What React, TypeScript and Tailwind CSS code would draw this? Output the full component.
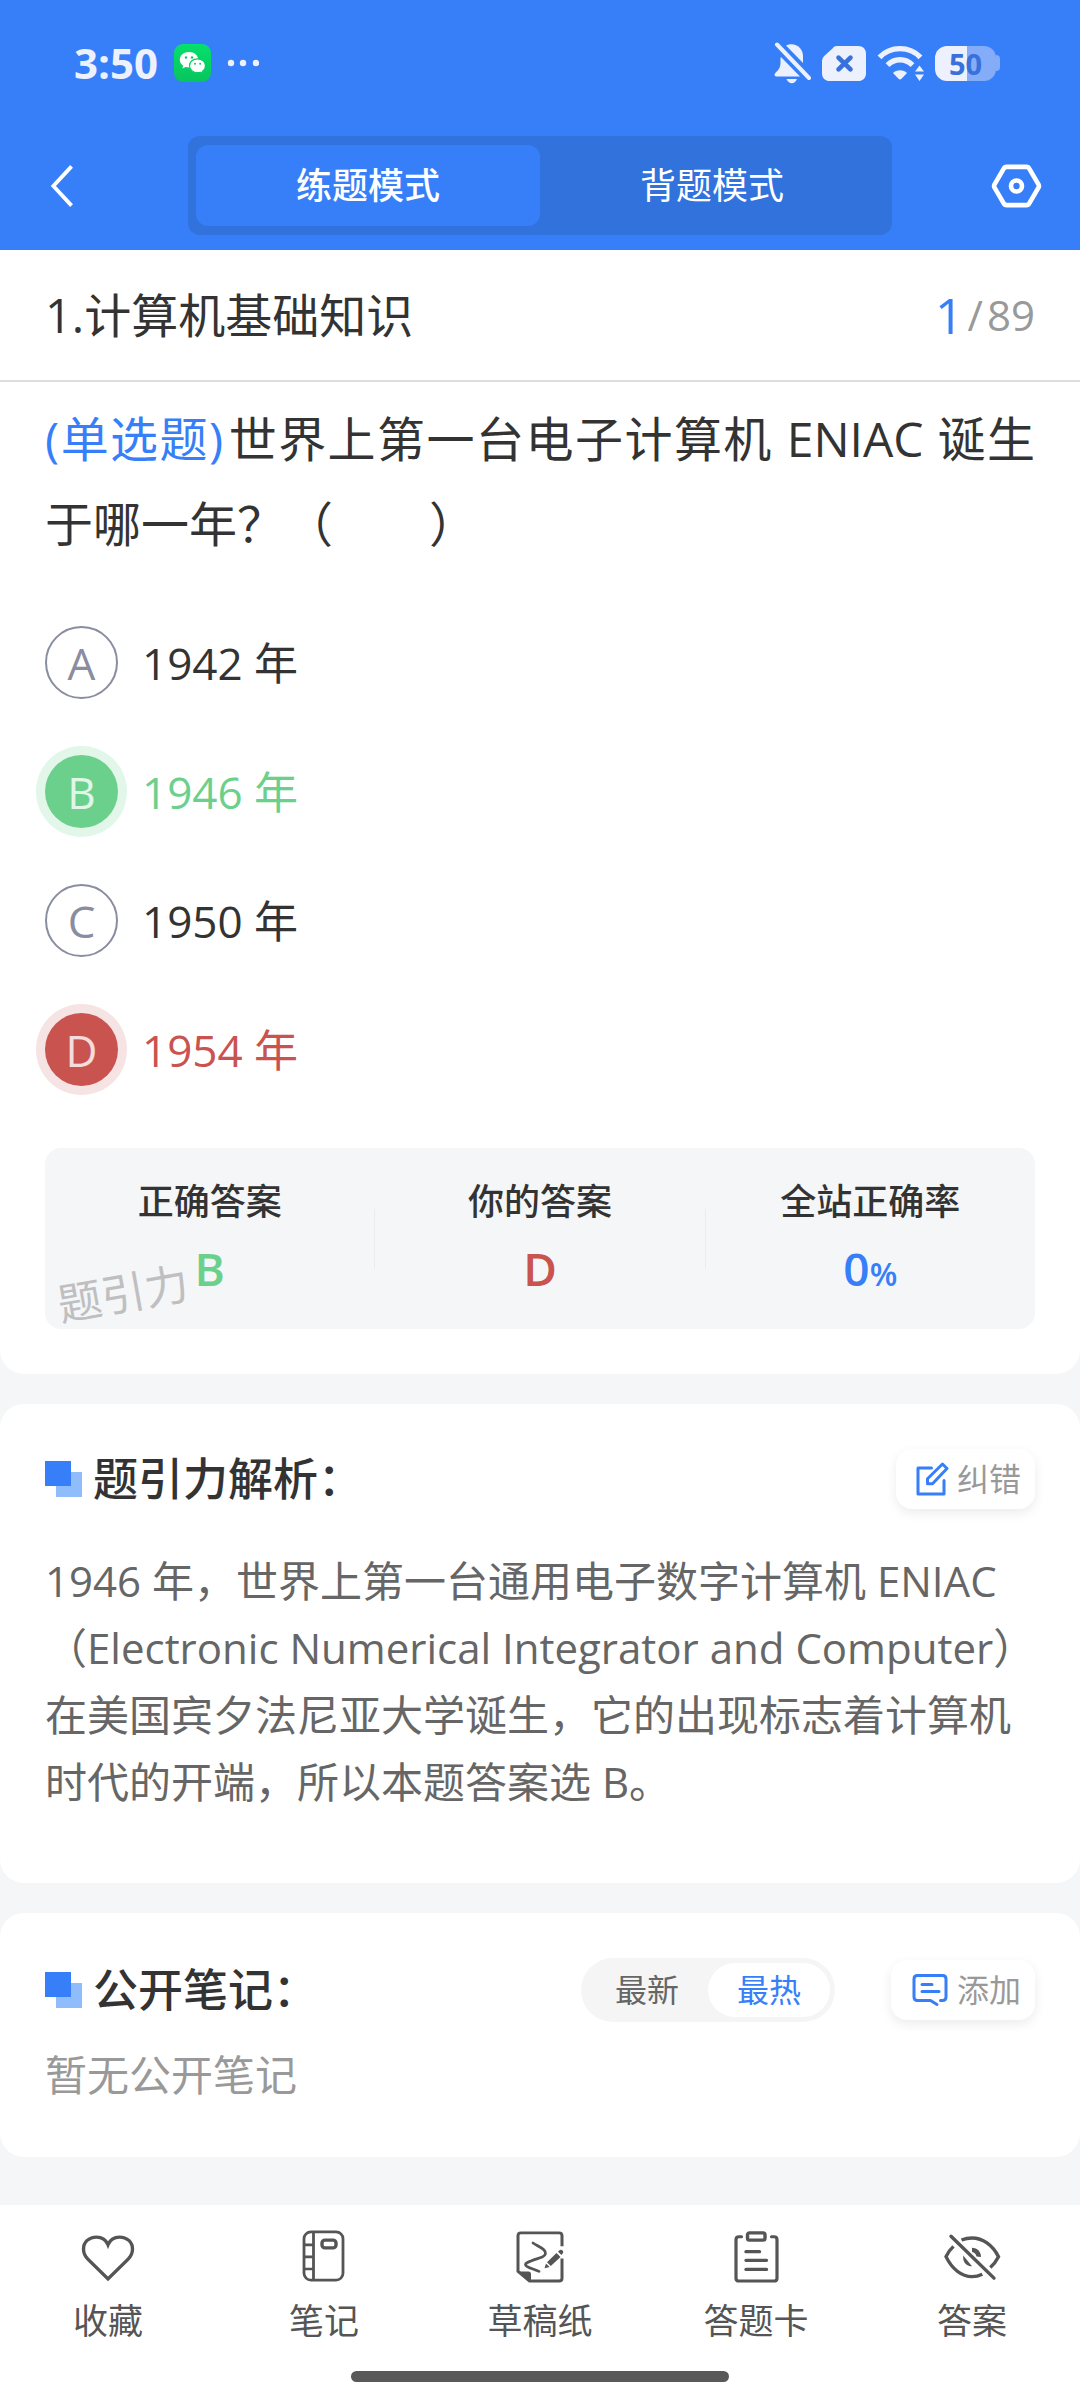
import type { ReactNode } from "react";

type OptionState = "idle" | "correct" | "wrong";

interface Option {
  key: string;
  text: string;
  state: OptionState;
}

const options: Option[] = [
  { key: "A", text: "1942 年", state: "idle" },
  { key: "B", text: "1946 年", state: "correct" },
  { key: "C", text: "1950 年", state: "idle" },
  { key: "D", text: "1954 年", state: "wrong" },
];

const badgeStyles: Record<OptionState, string> = {
  idle: "border-2 border-[#8a8da0] text-[#8a8da0]",
  correct: "bg-[#6bd08c] text-white/80 ring-[9px] ring-[#e2f7e9]",
  wrong: "bg-[#c9534f] text-white/80 ring-[9px] ring-[#f6e4e5]",
};

const textStyles: Record<OptionState, string> = {
  idle: "text-[#333333]",
  correct: "text-[#6bd08c]",
  wrong: "text-[#c9534f]",
};

function StatusBar() {
  return (
    <div className="flex h-[126px] items-center justify-between pr-[80px] pl-[74px]">
      <div className="flex items-center gap-4 text-[#ecf1fd]">
        <span className="text-[42px] leading-none font-bold">3:50</span>
        <svg width="37" height="38" viewBox="0 0 37 38" aria-hidden="true">
          <defs>
            <linearGradient id="wx" x1="0" y1="0" x2="0" y2="1">
              <stop offset="0" stopColor="#05e06c" />
              <stop offset="1" stopColor="#08c45d" />
            </linearGradient>
          </defs>
          <rect width="37" height="38" rx="9" fill="url(#wx)" />
          <path d="M15 8c-5.200 0-9.200 3.400-9.200 7.700 0 2.500 1.300 4.600 3.400 6l-.8 2.800 3.200-1.600c1 .3 2.200.5 3.400.5 5.200 0 9.200-3.400 9.200-7.700S20.200 8 15 8z" fill="#fff" />
          <path d="M23.500 14.800c-4.500 0-8 3-8 6.900s3.500 6.900 8 6.900c1 0 2-.1 2.900-.4l2.700 1.400-.7-2.400c1.900-1.300 3.100-3.200 3.100-5.500 0-3.900-3.500-6.900-8-6.900z" fill="#fff" stroke="#07cf63" strokeWidth="1.200" />
          <g fill="#07cf63">
            <circle cx="12" cy="13.500" r="1.200" />
            <circle cx="18" cy="13.500" r="1.200" />
            <circle cx="21" cy="19.700" r="1" />
            <circle cx="26.200" cy="19.700" r="1" />
          </g>
        </svg>
        <svg width="32" height="8" viewBox="0 0 32 8" fill="currentColor" aria-hidden="true">
          <circle cx="4" cy="4" r="3.200" />
          <circle cx="16" cy="4" r="3.200" />
          <circle cx="29" cy="4" r="3.200" />
        </svg>
      </div>

      <div className="flex items-center gap-[11px] text-[#ecf1fd]">
        <svg width="37" height="42" viewBox="0 0 37 42" fill="currentColor" aria-hidden="true">
          <path d="M6.500 16v5c0 4-1.500 6.500-5 9.800-1.600 1.600-1.200 3.700 1 3.700H26L7 15z" />
          <path d="M12 3.500C14 2.600 15.500 2.200 17.500 2.200 24 2.200 29 7.500 29 14v7z" />
          <path d="M12.500 37h10.500c-1 2.700-2.900 4.200-5.200 4.200s-4.300-1.500-5.300-4.200z" />
          <path d="M3 2.500 35 36" stroke="currentColor" strokeWidth="4" strokeLinecap="round" />
        </svg>
        <svg width="44" height="35" viewBox="0 0 44 36" preserveAspectRatio="none" aria-hidden="true">
          <path d="M14.500 0H36c5 0 8 3 8 8v20c0 5-3 8-8 8H8c-5 0-8-3-8-8V16c0-2.500.8-4.300 2.500-6L11 2c1-1.300 2-2 3.500-2z" fill="currentColor" />
          <path d="m16.500 12 12 12m0-12-12 12" stroke="#3871dc" strokeWidth="4.600" strokeLinecap="round" />
        </svg>
        <svg width="47" height="36" viewBox="0 0 47 36" aria-hidden="true">
          <g fill="none" stroke="currentColor" strokeWidth="5.400">
            <path d="M2.500 12.300C8 6.500 15 3.600 23 3.600s15 2.900 20.500 8.700" />
            <path d="M10.500 20.200c3.500-3.600 7.700-5.400 12.500-5.400s9 1.800 12.500 5.400" />
          </g>
          <path d="M16 28c1.800-1.800 4.200-2.700 7-2.700s5.200.9 7 2.700l-5.500 5.800c-1 1-2 1-3 0z" fill="currentColor" />
          <path d="M42.500 20.500 47 26.500h-9zM42.500 36 38 29.500h9z" fill="currentColor" />
        </svg>
        <div className="flex items-center">
          <div className="flex h-[35px] w-[61px] items-center justify-center rounded-xl bg-linear-to-r from-[#ecf1fd] from-53% to-[#84acf9] to-53%">
            <span className="text-[29px] leading-none font-bold text-[#3871dc]">50</span>
          </div>
          <span className="h-4 w-1 rounded-r bg-[#84acf9]" />
        </div>
      </div>
    </div>
  );
}

function ModeBar() {
  return (
    <div className="flex items-center justify-between px-[37px] pt-[10px] pb-[15px]">
      <button type="button" aria-label="返回" className="flex w-[60px] justify-start pl-3 text-white">
        <svg width="26" height="44" viewBox="0 0 26 46" fill="none" stroke="currentColor" strokeWidth="4" aria-hidden="true">
          <path d="M23 2.500 4 23l19 20.500" />
        </svg>
      </button>
      <div role="tablist" className="flex w-[70%] max-w-full shrink rounded-xl bg-[#3172dc] px-2 py-[9px] text-4xl leading-[81px] text-white">
        <button type="button" role="tab" aria-selected="true" className="flex-1 rounded-xl bg-[#377ff8] font-medium">
          练题模式
        </button>
        <button type="button" role="tab" aria-selected="false" className="flex-1 rounded-xl">
          背题模式
        </button>
      </div>
      <button type="button" aria-label="设置" className="flex w-[60px] justify-end text-white">
        <svg width="53" height="46" viewBox="0 0 56 48" fill="none" stroke="currentColor" strokeWidth="4.900" strokeLinejoin="round" aria-hidden="true">
          <path d="M17.500 3.800h21c1.300 0 2.400.7 3 1.800l9.700 16.600c.6 1.100.6 2.500 0 3.600l-9.700 16.600c-.6 1.100-1.700 1.800-3 1.800h-21c-1.300 0-2.400-.7-3-1.800L4.800 25.800c-.6-1.100-.6-2.500 0-3.600l9.700-16.600c.6-1.100 1.700-1.800 3-1.800z" />
          <circle cx="28" cy="24" r="5.800" />
        </svg>
      </button>
    </div>
  );
}

function OptionRow({ option }: { option: Option }) {
  return (
    <label className="relative flex items-center gap-6 text-[44px] leading-none">
      <input type="radio" name="answer" value={option.key} defaultChecked={option.state === "wrong"} className="sr-only" />
      <span className={`flex size-[73px] shrink-0 items-center justify-center rounded-full ${badgeStyles[option.state]}`}>
        {option.key}
      </span>
      <span className={textStyles[option.state]}>{option.text}</span>
    </label>
  );
}

function Stat({ label, children }: { label: string; children: ReactNode }) {
  return (
    <div className="flex-1 text-center">
      <dt className="text-4xl leading-[54px] font-medium text-[#333333]">{label}</dt>
      <dd className="mt-1.5 h-[68px] text-[46px] leading-[66px] font-semibold">{children}</dd>
    </div>
  );
}

function SectionTitle({ children }: { children: ReactNode }) {
  return (
    <div className="flex items-center gap-[11px]">
      <svg width="37" height="36" viewBox="0 0 37 36" aria-hidden="true">
        <rect x="11" y="11" width="26" height="25" fill="#8fbdfb" />
        <rect width="26" height="25" fill="#377ff8" />
      </svg>
      <h2 className="text-[45px] leading-[60px] font-medium text-[#333333]">{children}</h2>
    </div>
  );
}

function ActionButton({ icon, children }: { icon: ReactNode; children: ReactNode }) {
  return (
    <button type="button" className="flex h-[60px] items-center gap-2 rounded-2xl bg-white pr-[14px] pl-5 text-[32px] leading-none text-[#999999] shadow-[0_4px_12px_rgba(0,0,0,0.08)]">
      {icon}
      {children}
    </button>
  );
}

function EditIcon() {
  return (
    <svg width="33" height="34" viewBox="0 0 33 34" fill="none" stroke="#377ff8" strokeWidth="3" strokeLinejoin="round" strokeLinecap="round" aria-hidden="true">
      <path d="M15.500 6H2v26h26V18.500" />
      <path d="M26.500 2 31 6.500 16.500 21.800h-5v-5z" />
    </svg>
  );
}

function NoteIcon() {
  return (
    <svg width="38" height="34" viewBox="-1 0 38 34" fill="none" stroke="#377ff8" strokeWidth="3" strokeLinecap="round" strokeLinejoin="round" aria-hidden="true">
      <path d="M28.500 27.500h2c2.200 0 3.500-1.300 3.500-3.500V6c0-2.200-1.300-3.500-3.500-3.500h-25C3.300 2.500 2 3.800 2 6v18c0 2.200 1.300 3.500 3.500 3.500h13l6.500 4" />
      <path d="M10 11.500h10M10 18.500h17" />
    </svg>
  );
}

const navItems: { label: string; icon: ReactNode }[] = [
  {
    label: "收藏",
    icon: <path d="M27 15.200C25.200 10.600 21.500 7.300 15.500 7.300 8 7.300 2.500 12.500 2.500 19.700c0 4.500 1.700 7.800 4.600 10.800L27 50.800 46.900 30.500c2.900-3 4.600-6.300 4.600-10.800 0-7.200-5.500-12.400-13-12.400-6 0-9.700 3.300-11.500 7.900z" />,
  },
  {
    label: "笔记",
    icon: (
      <>
        <rect x="7" y="2" width="39" height="50" rx="7" strokeWidth="2.800" />
        <path d="M16.500 2v50M7 15.500h9.500M7 28h9.500M7 40.500h9.500" strokeWidth="2.800" />
        <rect x="25" y="10.500" width="14" height="8" rx="3" strokeWidth="3.400" />
      </>
    ),
  },
  {
    label: "草稿纸",
    icon: (
      <>
        <path d="M49 17V6c0-2-1-3-3-3H8C6 3 5 4 5 6v37l11.500 10H46c2 0 3-1 3-3V29.500" strokeWidth="3" />
        <path d="M4.500 43h11c1.500 0 2.500 1 2.500 2.500V54z" fill="currentColor" stroke="none" />
        <path d="M20 13.500c4 2.800 7.500 4 10.800 7 2.700 2.700 2.200 6-1.500 7.500-5 2-10.600 3.500-15.300 6-2 1.200-2 2.600-.2 3.800 3.500 2.200 8.200 3.200 12.200 5.200" strokeWidth="2.800" strokeLinecap="round" />
        <path d="M34 33.500 43.500 24l4 4-9.700 9.500zM45 22.500l1.200-1.300c1-1 2.600-1 3.400 0 .9 1 .8 2.400 0 3.300L48.500 26zM33 34.700l3.700 3.700-5.200 1.300z" fill="currentColor" stroke="none" />
      </>
    ),
  },
  {
    label: "答题卡",
    icon: (
      <>
        <path d="M12.500 7H10C8 7 7 8 7 10V50c0 2 1 3 3 3h35c2 0 3-1 3-3V10c0-2-1-3-3-3h-2.500" strokeWidth="3.200" strokeLinecap="round" />
        <rect x="18.500" y="3" width="17.500" height="7.500" rx="2" strokeWidth="3.400" />
        <path d="M17 22.500h13.500M17 31.500h20.500M17 41h20.500" strokeWidth="3.400" strokeLinecap="round" />
      </>
    ),
  },
  {
    label: "答案",
    icon: (
      <>
        <path d="M16.500 10.500C20 9 23.500 8.300 27 8.300c10.500 0 20.500 7 26.500 19.400-2.300 4.600-5 8.300-8.200 11.200M8.500 17C5.300 20 2.800 23.500 1 27.700 7 40.500 16.500 48.500 27 48.500c3.500 0 7-.8 10.300-2.500" />
        <path d="M27 18.500c5.200 0 9 4 9 9.500l-4.500-.5c-.4-2.400-2-4.200-4.500-4.700zM18.200 26.500 27 37.700c-4.800 0-8.800-3.800-8.800-9z" fill="currentColor" stroke="none" />
        <path d="M6 6.500 49 50" strokeLinecap="round" />
      </>
    ),
  },
];

function BottomNav() {
  return (
    <nav className="bg-white pt-[25px] pb-[18px]">
      <ul className="flex">
        {navItems.map((item) => (
          <li key={item.label} className="flex-1">
            <button type="button" className="flex w-full flex-col items-center gap-[19px] text-[#555555]">
              <svg width="54" height="52" viewBox="0 0 54 54" preserveAspectRatio="none" fill="none" stroke="currentColor" strokeWidth="3.400" className="overflow-visible" aria-hidden="true">
                {item.icon}
              </svg>
              <span className="text-[35px] leading-10">{item.label}</span>
            </button>
          </li>
        ))}
      </ul>
      <div className="mx-auto mt-[30px] h-[11px] w-[35%] rounded-full bg-[#595959]" />
    </nav>
  );
}

export default function App() {
  return (
    <div className="flex min-h-screen flex-col bg-[#f4f6f8] font-['Open_Sans','Noto_Sans_CJK_SC',sans-serif]" lang="zh-CN">
      <header className="bg-[#377ff8]">
        <StatusBar />
        <ModeBar />
      </header>

      <main className="flex-1 space-y-[30px]">
        <section className="rounded-b-3xl bg-white pb-[45px]">
          <div className="flex h-[132px] items-center justify-between border-b-2 border-[#dddddd] px-[45px]">
            <h1 className="text-[47px] leading-none text-[#333333]">1.计算机基础知识</h1>
            <p className="flex items-center gap-1 text-[42px] leading-none text-[#999999]">
              <span className="text-[50px] font-medium text-[#377ff8]">1</span>
              <span>/</span>
              <span>89</span>
            </p>
          </div>

          <div className="px-[45px] pt-[14px]">
            <p className="text-justify text-5xl leading-[85px] text-[#333333]">
              <span className="mr-1 text-[#377ff8]">(单选题)</span>
              世界上第一台电子计算机 ENIAC 诞生于哪一年？（　　）
            </p>

            <fieldset aria-label="选项" className="mt-[60px] space-y-14">
              {options.map((option) => (
                <OptionRow key={option.key} option={option} />
              ))}
            </fieldset>

            <div className="relative mt-[62px] rounded-2xl bg-[#f4f6f8] pt-[27px] pb-[26px]">
              <dl className="flex items-center">
                <Stat label="正确答案">
                  <span className="text-[#6bd08c]">B</span>
                </Stat>
                <div className="h-[60px] w-px bg-[#eaecef]" />
                <Stat label="你的答案">
                  <span className="text-[#c9534f]">D</span>
                </Stat>
                <div className="h-[60px] w-px bg-[#eaecef]" />
                <Stat label="全站正确率">
                  <span className="text-[#377ff8]">
                    0<span className="text-[32px]">%</span>
                  </span>
                </Stat>
              </dl>
              <span className="absolute bottom-[14px] left-3 -rotate-10 text-[44px] leading-none text-[#bfbfc1]">题引力</span>
            </div>
          </div>
        </section>

        <section className="rounded-3xl bg-white px-[45px] pt-[45px] pb-[68px]">
          <div className="flex items-center justify-between">
            <SectionTitle>题引力解析：</SectionTitle>
            <ActionButton icon={<EditIcon />}>纠错</ActionButton>
          </div>
          <p className="mt-[38px] text-[42px] leading-[67px] text-[#666666]">
            1946 年，世界上第一台通用电子数字计算机 ENIAC（Electronic Numerical Integrator and Computer）在美国宾夕法尼亚大学诞生，它的出现标志着计算机时代的开端，所以本题答案选 B。
          </p>
        </section>

        <section className="rounded-3xl bg-white px-[45px] pt-[45px] pb-[52px]">
          <div className="flex items-center justify-between">
            <SectionTitle>公开笔记：</SectionTitle>
            <div className="flex items-center gap-14">
              <div className="flex rounded-full bg-[#f5f5f5] p-[5px] text-[32px] leading-[54px] text-[#666666]">
                <button type="button" aria-pressed="false" className="w-[122px] rounded-full">
                  最新
                </button>
                <button type="button" aria-pressed="true" className="w-[122px] rounded-full bg-white text-[#377ff8]">
                  最热
                </button>
              </div>
              <ActionButton icon={<NoteIcon />}>添加</ActionButton>
            </div>
          </div>
          <p className="mt-[23px] text-[42px] leading-[60px] text-[#999999]">暂无公开笔记</p>
        </section>
      </main>

      <BottomNav />
    </div>
  );
}
